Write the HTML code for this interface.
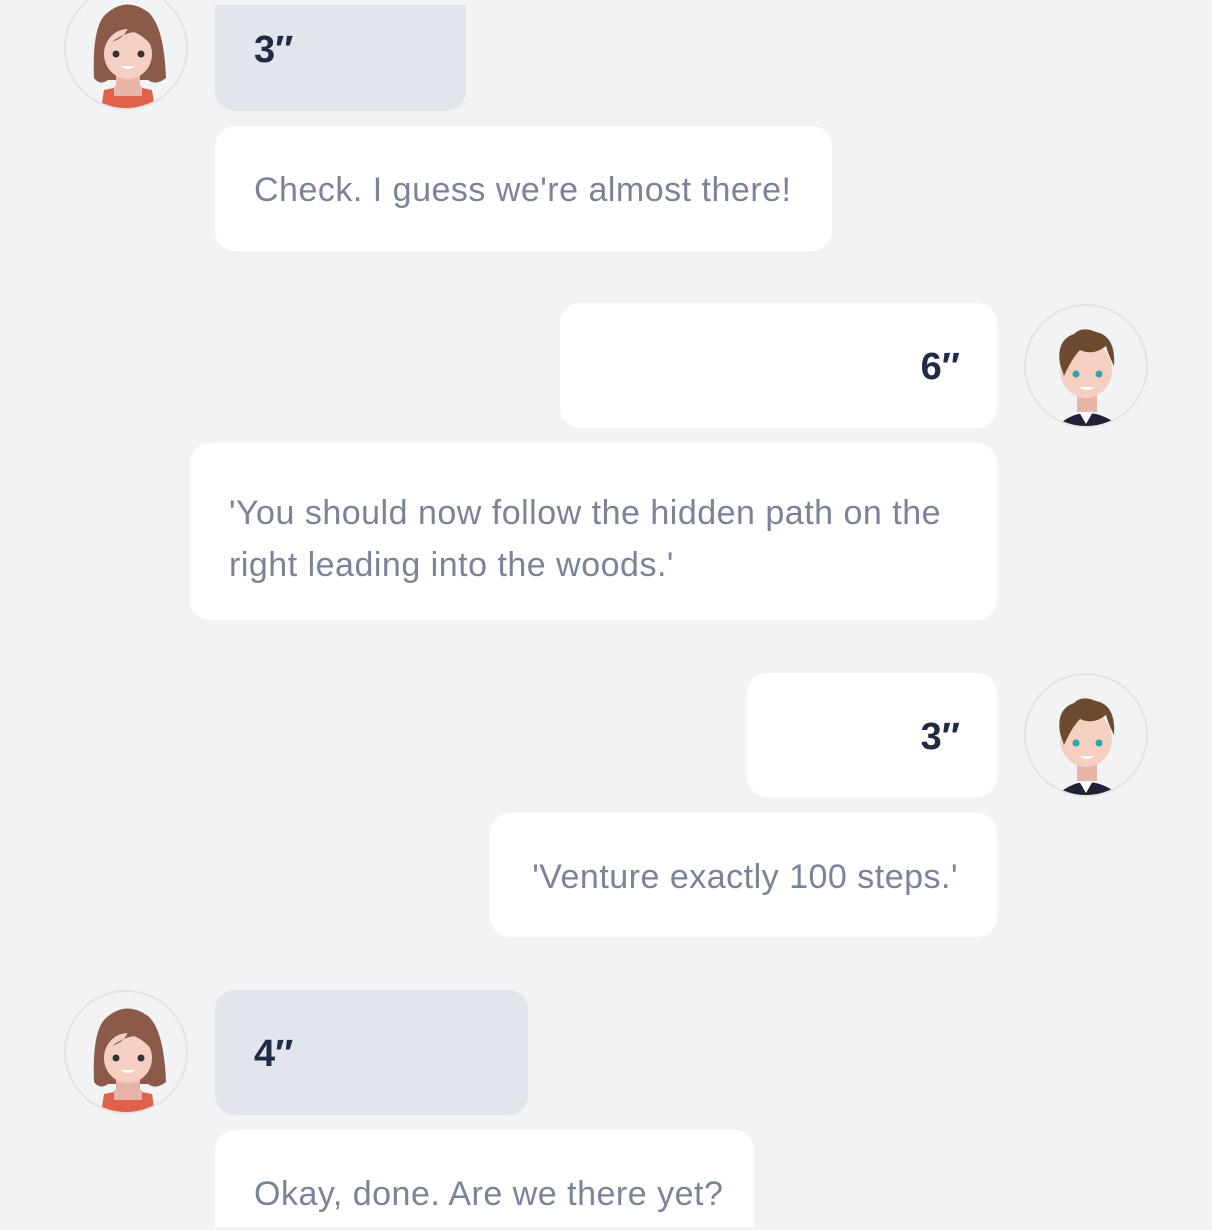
<!DOCTYPE html>
<html><head><meta charset="utf-8"><style>
body{margin:0;width:1212px;height:1230px;background:#f2f3f5;position:relative;overflow:hidden;font-family:"Liberation Sans",Arial,sans-serif}
.b{position:absolute;background:#fff;border-radius:20px;box-sizing:border-box;color:#7a8499;font-size:34px;letter-spacing:0.5px}
.g{background:#e1e5ec}
.n{color:#1f2a44;font-weight:bold;font-size:38px;letter-spacing:0}
.av{position:absolute;width:124px;height:124px}
</style></head><body>
<svg width="0" height="0" style="position:absolute"><defs>
<g id="girl">
<circle cx="62" cy="62" r="61" fill="#f2f3f5" stroke="#e4e4e4" stroke-width="2"/>
<clipPath id="cg"><circle cx="62" cy="62" r="60"/></clipPath>
<g clip-path="url(#cg)">
<path d="M30 92 Q28 40 42 28 Q62 10 84 26 Q100 40 102 92 Q92 100 84 94 L44 94 Q36 100 30 92Z" fill="#8b5a4a"/>
<rect x="52" y="88" width="24" height="22" fill="#e8b4a8"/>
<path d="M40 104 Q64 98 88 104 L92 130 L36 130Z" fill="#e0614a"/>
<rect x="50" y="100" width="28" height="10" fill="#e8b4a8"/>
<ellipse cx="64" cy="68" rx="24" ry="25" fill="#f5d0c2"/>
<path d="M40 58 Q50 40 64 42 Q60 52 48 56 Q58 48 70 46 Q80 50 88 60 L88 44 Q64 30 40 44Z" fill="#8b5a4a"/>
<circle cx="52" cy="68" r="3.5" fill="#333"/><circle cx="77" cy="68" r="3.5" fill="#333"/>
<path d="M57 80 Q64 86 71 80Z" fill="#fff"/>
</g></g>
<g id="boy">
<circle cx="62" cy="62" r="61" fill="#f2f3f5" stroke="#e4e4e4" stroke-width="2"/>
<clipPath id="cb"><circle cx="62" cy="62" r="60"/></clipPath>
<g clip-path="url(#cb)">
<path d="M38 118 Q62 100 90 118 L90 130 L38 130Z" fill="#1d2236"/>
<path d="M55 108 L62 120 L69 108Z" fill="#fff"/>
<rect x="53" y="88" width="20" height="20" fill="#e8b4a8"/>
<ellipse cx="62" cy="66" rx="26" ry="28" fill="#f5cfc0"/>
<path d="M36 60 Q32 36 50 30 Q58 22 72 28 Q92 32 90 62 Q84 50 82 42 Q70 52 56 46 Q48 54 40 72Z" fill="#6b4a30"/>
<circle cx="52" cy="70" r="3.5" fill="#2aa8b0"/><circle cx="75" cy="70" r="3.5" fill="#2aa8b0"/>
<path d="M55 83 Q63 89 71 83Z" fill="#fff"/>
</g></g>
</defs></svg>

<svg class="av" style="left:64px;top:-14px" viewBox="0 0 124 124"><use href="#girl"/></svg>
<div class="b g n" style="left:215px;top:5px;width:251px;height:106px;border-radius:0 0 20px 20px;padding:24px 0 0 39px">3″</div>
<div class="b" style="left:215px;top:126px;width:617px;height:125px;padding:45px 0 0 39px">Check. I guess we're almost there!</div>

<div class="b n" style="left:560px;top:303px;width:437px;height:125px;padding:43px 37px 0 0;text-align:right">6″</div>
<svg class="av" style="left:1024px;top:304px" viewBox="0 0 124 124"><use href="#boy"/></svg>
<div class="b" style="left:190px;top:443px;width:807px;height:177px;padding:44px 20px 0 39px;line-height:52px">'You should now follow the hidden path on the right leading into the woods.'</div>

<div class="b n" style="left:747px;top:673px;width:250px;height:124px;padding:43px 37px 0 0;text-align:right">3″</div>
<svg class="av" style="left:1024px;top:673px" viewBox="0 0 124 124"><use href="#boy"/></svg>
<div class="b" style="left:490px;top:813px;width:507px;height:124px;padding:45px 39px 0 0;text-align:right">'Venture exactly 100 steps.'</div>

<svg class="av" style="left:64px;top:990px" viewBox="0 0 124 124"><use href="#girl"/></svg>
<div class="b g n" style="left:215px;top:990px;width:313px;height:125px;padding:43px 0 0 39px">4″</div>
<div class="b" style="left:215px;top:1130px;width:539px;height:97px;border-radius:20px 20px 0 0;padding:45px 0 0 39px">Okay, done. Are we there yet?</div>
</body></html>
